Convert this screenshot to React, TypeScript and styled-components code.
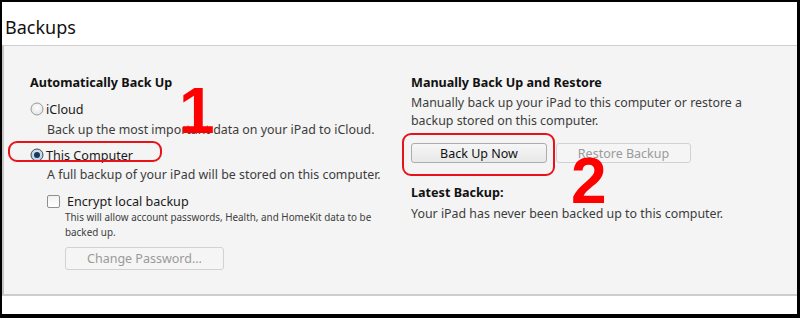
import React from "react";
import styled, { createGlobalStyle } from "styled-components";

const Global = createGlobalStyle`
  html, body {
    margin: 0;
    padding: 0;
    background: #000;
  }
  body {
    font-family: "Noto Sans", "Open Sans", sans-serif;
    color: #222;
  }
`;

const Frame = styled.div`
  box-sizing: border-box;
  width: 800px;
  height: 318px;
  border-style: solid;
  border-color: #000;
  border-width: 2px 3px 4px 2px;
  background: #fff;
  display: flex;
  flex-direction: column;
`;

const PageTitle = styled.div`
  height: 43px;
  padding-left: 3px;
  font-size: 18px;
  line-height: 26px;
  padding-top: 12px;
  box-sizing: border-box;
  color: #111;
`;

const Panel = styled.div`
  position: relative;
  box-sizing: border-box;
  height: 251px;
  background: #f4f4f4;
  border-top: 1px solid #cfcfcf;
  border-left: 2px solid #c4c4c4;
  border-bottom: 2px solid #cdcdcd;
  display: grid;
  grid-template-columns: 381px 1fr;
  padding: 28px 0 0 26px;
`;

const Column = styled.div`
  display: flex;
  flex-direction: column;
`;

const Heading = styled.div<{ $gap?: number }>`
  font-size: 12.6px;
  font-weight: 700;
  line-height: 18px;
  color: #111;
  margin-top: ${(p) => p.$gap ?? 0}px;
`;

const OptionRow = styled.label<{ $gap?: number }>`
  position: relative;
  display: flex;
  align-items: center;
  height: 18px;
  font-size: 12.6px;
  color: #1a1a1a;
  margin-top: ${(p) => p.$gap ?? 0}px;
`;

const Text = styled.div<{ $gap?: number; $indent?: number; $size?: number; $line?: number }>`
  font-size: ${(p) => p.$size ?? 12.4}px;
  line-height: ${(p) => p.$line ?? 18}px;
  color: #3c3c3c;
  margin-top: ${(p) => p.$gap ?? 0}px;
  padding-left: ${(p) => p.$indent ?? 0}px;
`;

const Box = styled.span`
  box-sizing: border-box;
  width: 13px;
  height: 13px;
  border: 1px solid #8f8f8f;
  border-radius: 2px;
  background: linear-gradient(#f2f2f2, #ffffff);
  margin: 0 7px 0 17px;
`;

const Button = styled.div<{ $width: number; $height: number; $disabled?: boolean }>`
  box-sizing: border-box;
  width: ${(p) => p.$width}px;
  height: ${(p) => p.$height}px;
  display: flex;
  align-items: center;
  justify-content: center;
  border: 1px solid ${(p) => (p.$disabled ? "#d2d2d2" : "#adadad")};
  border-radius: 3px;
  background: ${(p) =>
    p.$disabled ? "#f5f5f5" : "linear-gradient(#f6f6f6, #e8e8e8)"};
  font-size: 12.5px;
  color: ${(p) => (p.$disabled ? "#9a9a9a" : "#111")};
`;

const ButtonRow = styled.div`
  position: relative;
  display: flex;
  gap: 9px;
  margin-top: 13px;
`;

const Ring = styled.div<{ $top: number; $left: number; $width: number; $height: number }>`
  position: absolute;
  top: ${(p) => p.$top}px;
  left: ${(p) => p.$left}px;
  width: ${(p) => p.$width}px;
  height: ${(p) => p.$height}px;
  box-sizing: border-box;
  border: 2px solid #e8121b;
  border-radius: 9px;
  pointer-events: none;
`;

const Marker = styled.div<{ $top: number; $left: number }>`
  position: absolute;
  top: ${(p) => p.$top}px;
  left: ${(p) => p.$left}px;
  font-family: "Liberation Sans", Arial, sans-serif;
  font-weight: 700;
  font-size: 64px;
  line-height: 64px;
  color: #ff0000;
`;

const Radio = ({ checked }: { checked?: boolean }) => (
  <svg width="14" height="14" viewBox="0 0 14 14" style={{ marginRight: 2 }}>
    <defs>
      <radialGradient id={checked ? "rOn" : "rOff"} cx="50%" cy="40%" r="60%">
        <stop offset="0%" stopColor={checked ? "#e3f0fb" : "#ffffff"} />
        <stop offset="100%" stopColor={checked ? "#a9c9e6" : "#e2e2e2"} />
      </radialGradient>
    </defs>
    <circle cx="7" cy="7" r="6" fill={`url(#${checked ? "rOn" : "rOff"})`} stroke={checked ? "#4a4a4a" : "#9a9a9a"} strokeWidth="1" />
    {checked && <circle cx="7" cy="7" r="3" fill="#1d3557" />}
  </svg>
);

export default function App() {
  return (
    <>
      <Global />
      <Frame>
        <PageTitle>Backups</PageTitle>
        <Panel>
          <Column>
            <Heading>Automatically Back Up</Heading>
            <OptionRow $gap={8}>
              <Radio />
              iCloud
            </OptionRow>
            <Text $gap={3} $indent={17}>
              Back up the most important data on your iPad to iCloud.
            </Text>
            <OptionRow $gap={7}>
              <Ring $top={-5} $left={-22} $width={154} $height={21} />
              <Radio checked />
              This Computer
            </OptionRow>
            <Text $gap={2} $indent={17}>
              A full backup of your iPad will be stored on this computer.
            </Text>
            <OptionRow $gap={8}>
              <Box />
              Encrypt local backup
            </OptionRow>
            <Text $size={9.9} $line={15} $indent={35}>
              This will allow account passwords, Health, and HomeKit data to be
              <br />
              backed up.
            </Text>
            <Text $gap={7} $indent={35}>
              <Button $width={159} $height={23} $disabled>
                Change Password...
              </Button>
            </Text>
          </Column>
          <Column>
            <Heading>Manually Back Up and Restore</Heading>
            <Text $gap={2}>
              Manually back up your iPad to this computer or restore a
              <br />
              backup stored on this computer.
            </Text>
            <ButtonRow>
              <Ring $top={-10} $left={-9} $width={153} $height={43} />
              <Button $width={136} $height={20}>
                Back Up Now
              </Button>
              <Button $width={135} $height={20} $disabled>
                Restore Backup
              </Button>
            </ButtonRow>
            <Heading $gap={21}>Latest Backup:</Heading>
            <Text $gap={3}>Your iPad has never been backed up to this computer.</Text>
          </Column>
          <Marker $top={33} $left={175}>1</Marker>
          <Marker $top={103} $left={567}>2</Marker>
        </Panel>
      </Frame>
    </>
  );
}
